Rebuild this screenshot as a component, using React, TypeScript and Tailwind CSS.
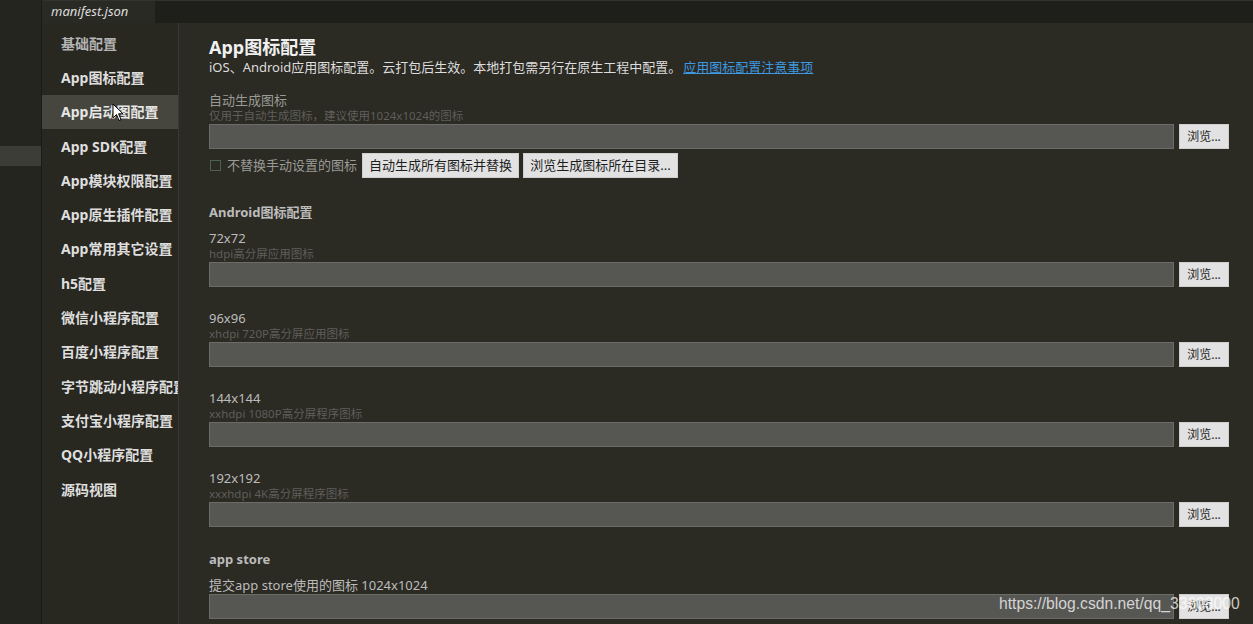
import React from "react";

const FONT = { fontFamily: '"Noto Sans", "Noto Sans CJK SC", sans-serif' };

const sideItems = [
  "基础配置",
  "App图标配置",
  "App启动图配置",
  "App SDK配置",
  "App模块权限配置",
  "App原生插件配置",
  "App常用其它设置",
  "h5配置",
  "微信小程序配置",
  "百度小程序配置",
  "字节跳动小程序配置",
  "支付宝小程序配置",
  "QQ小程序配置",
  "源码视图",
];

function FileRow() {
  return (
    <div className="flex h-[25px] items-stretch gap-[5px]">
      <div className="flex-1 border border-[#6b6b67] bg-[#565653]" />
      <button className="w-[50px] border border-[#cfcfcf] bg-[#e2e2e2] text-[12px] leading-none text-[#1e1e1e]">
        浏览...
      </button>
    </div>
  );
}

function Group({ label, hint }: { label: string; hint: string }) {
  return (
    <div className="mb-[23px]">
      <div className="h-[16px] text-[13px] leading-[16px] text-[#bcbcbc]">{label}</div>
      <div className="h-[16px] text-[11.5px] leading-[16px] text-[#5f5f5b]">{hint}</div>
      <FileRow />
    </div>
  );
}

export default function App() {
  return (
    <div
      className="relative flex h-[624px] w-[1253px] overflow-hidden bg-[#2b2a23]"
      style={FONT}
    >
      {/* left strip */}
      <div className="w-[42px] shrink-0 border-r border-[#1b1b17] bg-[#24251f]">
        <div className="h-[146px]" />
        <div className="h-[20px] bg-[#3d3d38]" />
      </div>

      <div className="flex min-w-0 flex-1 flex-col">
        {/* tab bar */}
        <div className="flex h-[23px] shrink-0 border-t border-[#33332e] bg-[#1e1f1b]">
          <div className="flex w-[113px] items-center bg-[#2a2a25] pl-[9px] text-[13px] italic text-[#dcdcdc]">
            manifest.json
          </div>
        </div>

        <div className="flex min-h-0 flex-1">
          {/* sidebar */}
          <div className="w-[137px] shrink-0 overflow-hidden border-r border-[#3a3a34] bg-[#282720] pt-[3px]">
            {sideItems.map((t, i) => (
              <div
                key={t}
                className={
                  "flex h-[34.3px] items-center whitespace-nowrap pl-[19px] text-[14px] font-bold " +
                  (i === 2 ? "bg-[#46463f] text-[#e6e6e6]" : i === 0 ? "text-[#b4b4b4]" : "text-[#dedede]")
                }
              >
                {t}
              </div>
            ))}
          </div>

          {/* content */}
          <div className="min-w-0 flex-1 pl-[30px] pr-[24px] pt-[14px]">
            <div className="h-[20px] text-[18px] font-bold leading-[20px] text-[#f0f0f0]">App图标配置</div>
            <div className="mt-[2px] h-[16px] text-[13px] leading-[16px] text-[#dddddd]">
              iOS、Android应用图标配置。云打包后生效。本地打包需另行在原生工程中配置。
              <span className="ml-[2px] text-[#3d98e0] underline">应用图标配置注意事项</span>
            </div>

            <div className="mt-[17px] h-[16px] text-[13px] leading-[16px] text-[#9a9a96]">自动生成图标</div>
            <div className="h-[16px] text-[11.5px] leading-[16px] text-[#5f5f5b]">
              仅用于自动生成图标，建议使用1024x1024的图标
            </div>
            <FileRow />
            <div className="mt-[4px] flex h-[25px] items-stretch">
              <div className="flex items-center">
                <div className="ml-[1px] h-[11px] w-[11px] border border-[#4a6350]" />
                <span className="ml-[6px] text-[13px] text-[#9a9a96]">不替换手动设置的图标</span>
              </div>
              <button className="ml-[5px] w-[157px] border border-[#cfcfcf] bg-[#e2e2e2] text-[13px] text-[#1e1e1e]">
                自动生成所有图标并替换
              </button>
              <button className="ml-[4px] w-[155px] border border-[#cfcfcf] bg-[#e2e2e2] text-[13px] text-[#1e1e1e]">
                浏览生成图标所在目录...
              </button>
            </div>

            <div className="mt-[25px] mb-[9px] h-[18px] text-[13px] font-bold leading-[18px] text-[#bcbcbc]">
              Android图标配置
            </div>
            <Group label="72x72" hint="hdpi高分屏应用图标" />
            <Group label="96x96" hint="xhdpi 720P高分屏应用图标" />
            <Group label="144x144" hint="xxhdpi 1080P高分屏程序图标" />
            <Group label="192x192" hint="xxxhdpi 4K高分屏程序图标" />

            <div className="mt-[3px] mb-[9px] h-[18px] text-[13px] font-bold leading-[18px] text-[#bcbcbc]">
              app store
            </div>
            <div className="h-[17px] text-[13px] leading-[16px] text-[#bcbcbc]">提交app store使用的图标 1024x1024</div>
            <FileRow />
          </div>
        </div>
      </div>

      {/* mouse cursor */}
      <svg className="absolute left-[112px] top-[103px]" width="12" height="19" viewBox="0 0 12 19">
        <path d="M1 1 L1 15 L4.5 11.5 L7 17.5 L9 16.6 L6.6 10.8 L11 10.8 Z" fill="#ffffff" stroke="#000000" strokeWidth="1" />
      </svg>

      {/* watermark */}
      <div
        className="absolute left-[999px] top-[594px] whitespace-nowrap text-[15.7px] leading-[20px] text-white/75"
        style={{ fontFamily: '"Liberation Sans", Arial, sans-serif' }}
      >
        https://blog.csdn.net/qq_33608000
      </div>
    </div>
  );
}
